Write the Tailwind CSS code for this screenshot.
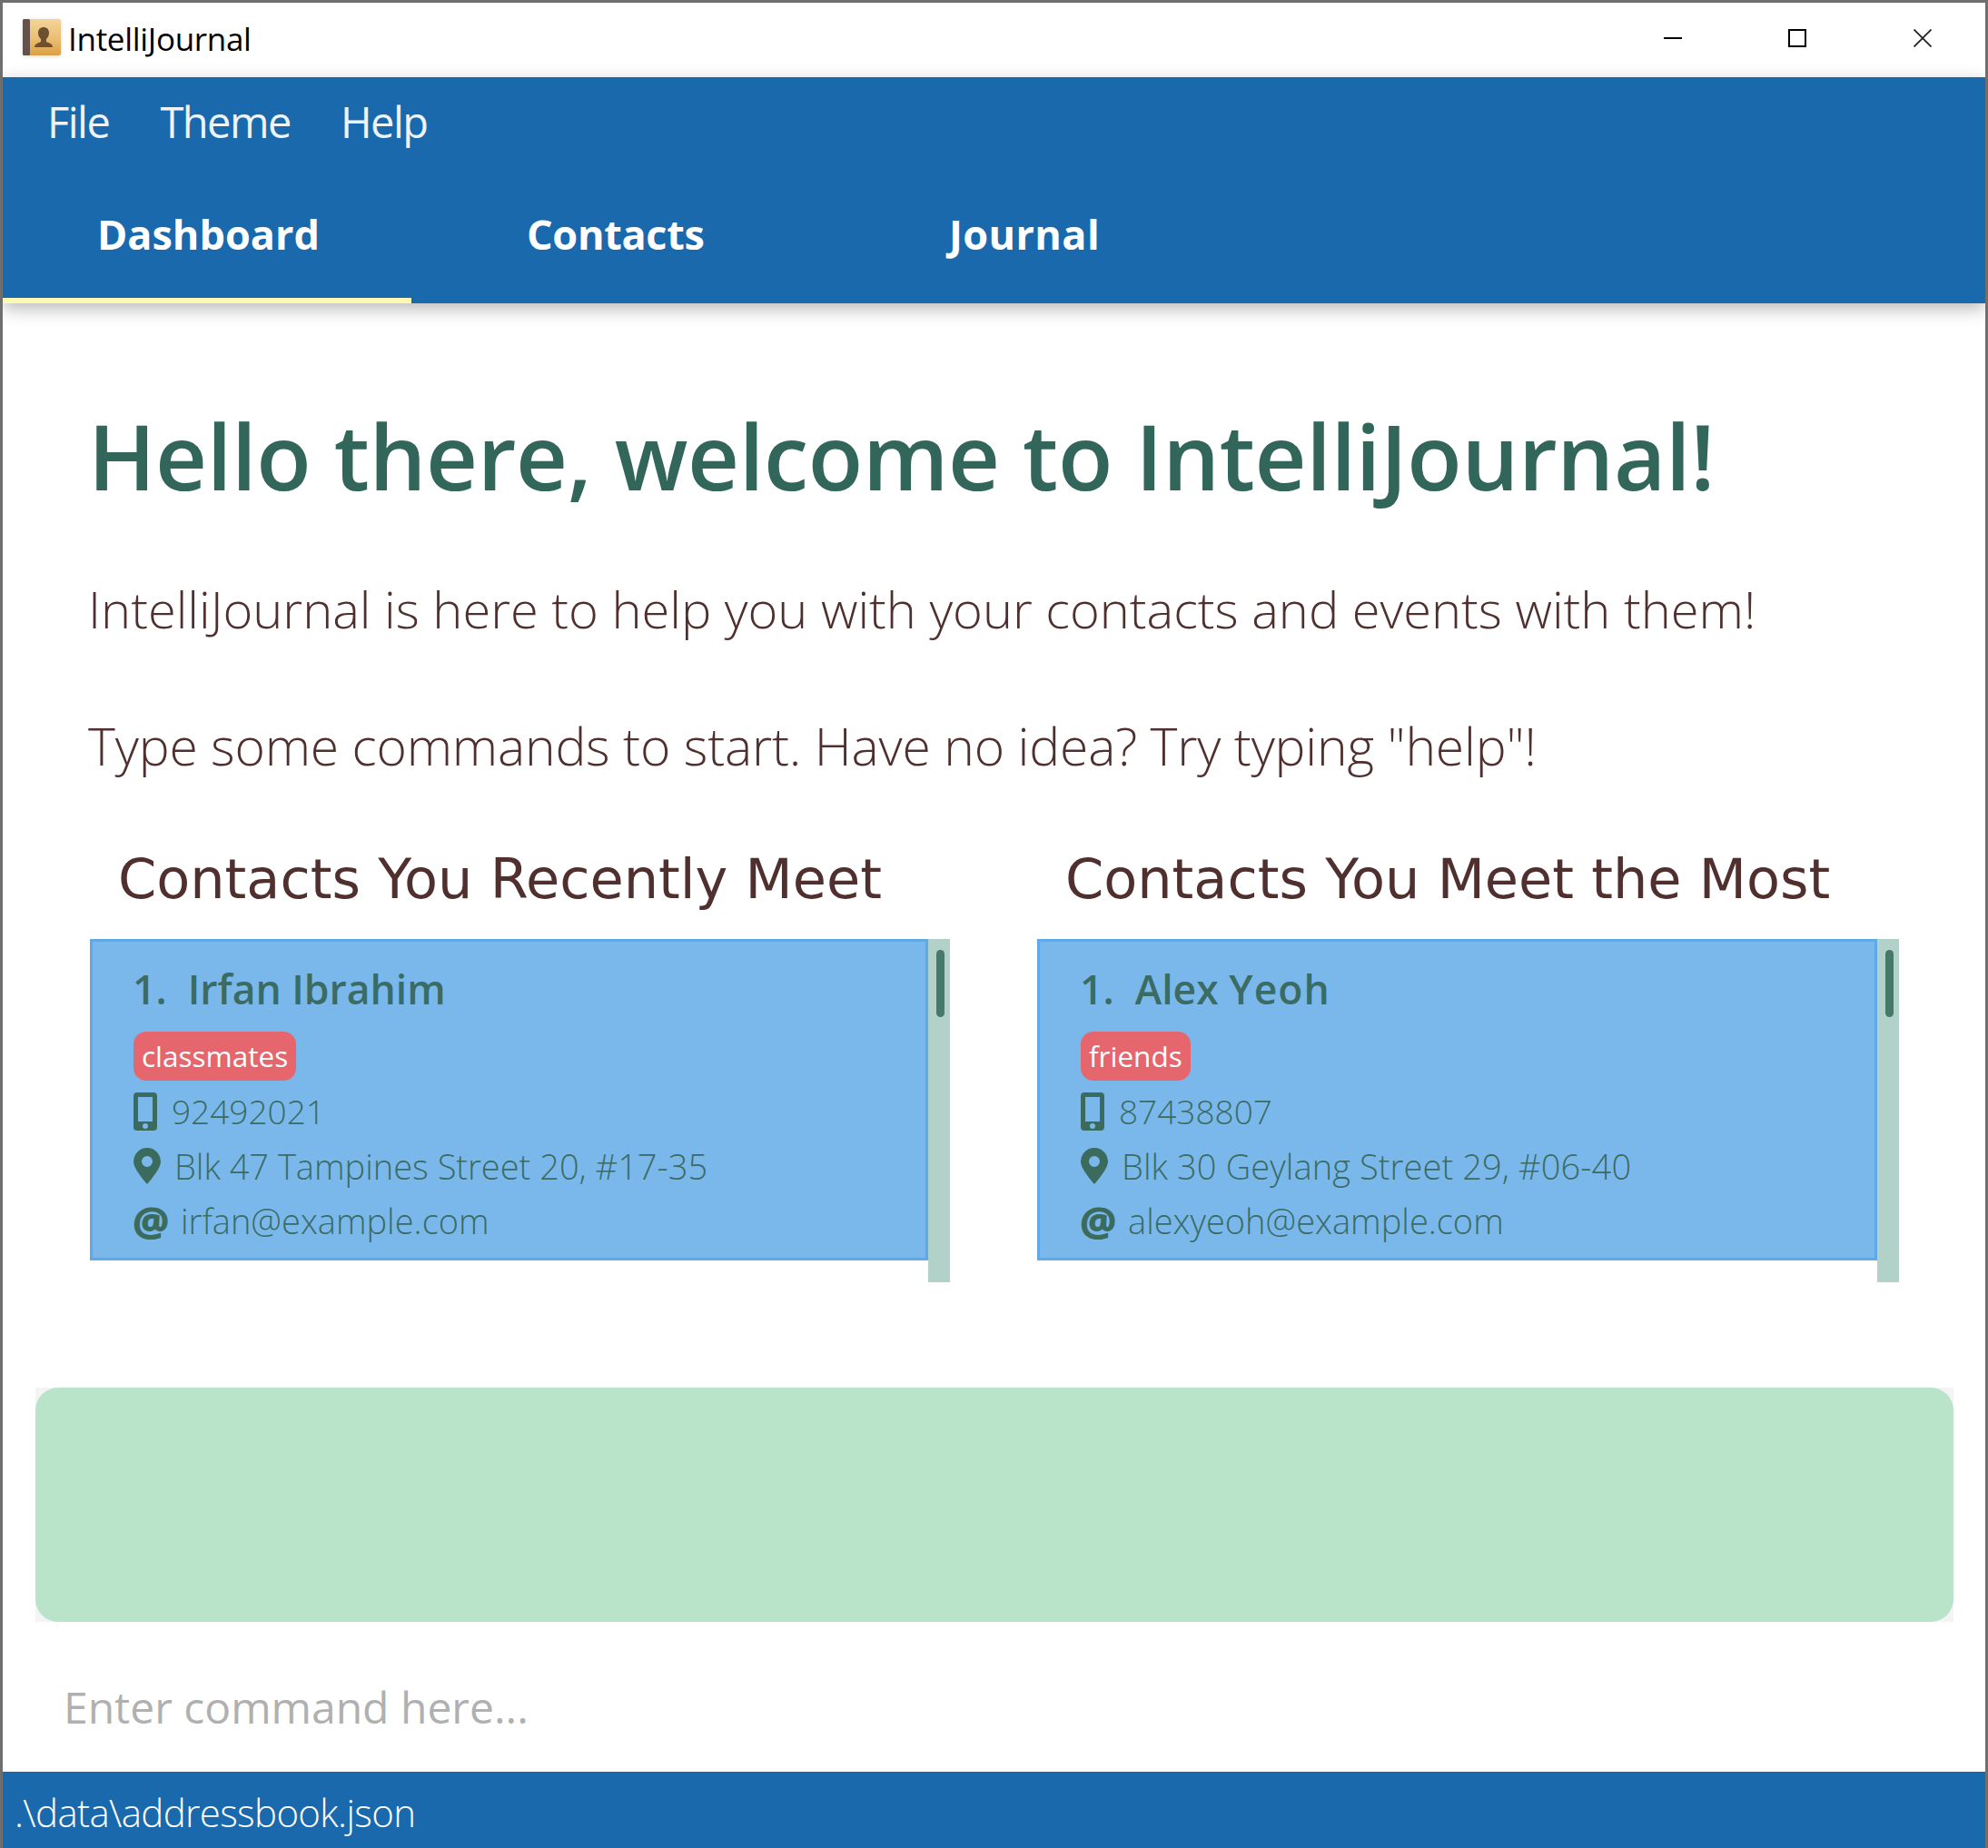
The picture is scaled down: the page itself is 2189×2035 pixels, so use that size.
<!DOCTYPE html>
<html lang="en">
<head>
  <meta charset="UTF-8" />
  <title>IntelliJournal</title>
  <script src="https://cdn.jsdelivr.net/npm/@tailwindcss/browser@4"></script>
</head>
<body class="bg-white font-['Open_Sans',sans-serif] overflow-hidden">
  <div class="relative w-[2189px] h-[2035px] flex flex-col border-x-[3px] border-t-[3px] border-[#6f6f6f] overflow-hidden">
    <!-- desktop showing through the window edge -->
    <div class="absolute left-[-3px] top-[142px] w-[3px] h-[190px] bg-[#2f3b6b]"></div>
    <div class="absolute right-[-3px] top-[142px] w-[3px] h-[190px] bg-[#2f3b6b]"></div>

    <!-- title bar -->
    <div class="h-[82px] shrink-0 flex items-center bg-white">
      <svg class="ml-[21px] mb-[4px] w-[44px] h-[42px] drop-shadow-sm" viewBox="0 0 44 42">
        <defs>
          <linearGradient id="book" x1="0" y1="0" x2="0" y2="1">
            <stop offset="0" stop-color="#f3d498" />
            <stop offset="0.5" stop-color="#ecc077" />
            <stop offset="1" stop-color="#dba044" />
          </linearGradient>
        </defs>
        <rect x="1" y="0" width="42" height="40" rx="2" fill="url(#book)" />
        <rect x="1" y="0" width="8" height="40" rx="1.5" fill="#64524a" />
        <path d="M14 31c0-4 5-5 7-6v-3c-2-2-3-4-3-7 0-4 3-6 6-6s6 2 6 6c0 3-1 5-3 7v3c2 1 7 2 7 6z" fill="#6d5030" />
      </svg>
      <span class="ml-[7px] mb-[1px] text-[35px] text-black tracking-[-0.3px]">IntelliJournal</span>
      <div class="ml-auto flex items-center mb-[4px]">
        <svg class="w-[20px] h-[20px]" viewBox="0 0 20 20"><path d="M0 10h20" stroke="#000" stroke-width="2" /></svg>
        <svg class="ml-[117px] w-[20px] h-[20px]" viewBox="0 0 20 20"><rect x="1" y="1" width="18" height="18" fill="none" stroke="#000" stroke-width="2" /></svg>
        <svg class="ml-[118px] mr-[59px] w-[20px] h-[20px]" viewBox="0 0 20 20"><path d="M0.5 0.5l19 19M19.5 0.5l-19 19" stroke="#222" stroke-width="1.8" /></svg>
      </div>
    </div>

    <!-- menu and tabs -->
    <div class="relative z-10 h-[249px] shrink-0 bg-[#1a69ad] shadow-[0_6px_18px_rgba(0,0,0,0.28)]">
      <div class="h-[98px] flex items-center text-[47px] text-[#eef3f8] tracking-[-1.5px]">
        <span class="ml-[49px]">File</span>
        <span class="ml-[56px]">Theme</span>
        <span class="ml-[55px]">Help</span>
      </div>
      <div class="flex h-[151px] text-[45px] font-bold text-white">
        <div class="w-[450px] h-full pt-[41px] pl-[104px] border-b-[6px] border-[#fdf9b4]">Dashboard</div>
        <div class="w-[463px] h-full pt-[41px] pl-[127px] tracking-[-0.3px]">Contacts</div>
        <div class="h-full pt-[41px] pl-[129px] tracking-[0.4px]">Journal</div>
      </div>
    </div>

    <!-- dashboard -->
    <div class="flex-1 flex flex-col">
      <div class="pl-[94px] pt-[103px] pb-[3px] text-[#33665a] text-[99px] font-semibold leading-[130px] tracking-[-0.35px] whitespace-nowrap">Hello there, welcome to IntelliJournal!</div>
      <div class="pl-[94px] mt-[50px] text-[#50302f] text-[56px] font-light leading-[100px] whitespace-nowrap">IntelliJournal is here to help you with your contacts and events with them!</div>
      <div class="pl-[94px] mt-[51px] text-[#50302f] text-[57px] font-light leading-[100px] tracking-[-0.2px] whitespace-nowrap">Type some commands to start. Have no idea? Try typing "help"!</div>

      <div class="grid grid-cols-[947px_949px] gap-[96px] pl-[96px] mt-[47px]">
        <div>
          <div class="pl-[31px] h-[100px] leading-[100px] text-[60.5px] text-[#50302f] font-['DejaVu_Sans',sans-serif] whitespace-nowrap">Contacts You Recently Meet</div>
          <div class="flex h-[378px] mt-[16px]">
            <div class="flex-1 h-[354px] border-[3px] border-[#5eaae8] bg-[#7ab8ec] pl-[44px] pr-[45px] pt-[22px] text-[#3a6c63]">
              <div class="h-[60px] leading-[60px] text-[44.5px] font-semibold whitespace-nowrap">1.&nbsp;&nbsp;Irfan Ibrahim</div>
              <div class="mt-[17px] ml-[1px] w-fit h-[54px] leading-[54px] px-[9px] rounded-[14px] bg-[#e5666d] text-white text-[31.5px]">classmates</div>
              <div class="mt-[4px] ml-[1px] h-[60px] flex items-center text-[37px] font-light">
                <svg class="w-[26px] h-[42px] shrink-0" viewBox="0 0 26 42"><path fill-rule="evenodd" d="M4 0h18a4 4 0 0 1 4 4v34a4 4 0 0 1-4 4H4a4 4 0 0 1-4-4V4a4 4 0 0 1 4-4zm1 5v27h16V5zm8 29a3 3 0 1 0 0 6 3 3 0 0 0 0-6z" fill="#3a6b5c" /></svg>
                <span class="ml-[16px]">92492021</span>
              </div>
              <div class="ml-[1px] h-[60px] flex items-center text-[38px] font-light whitespace-nowrap">
                <svg class="w-[30px] h-[40px] shrink-0" viewBox="0 0 30 40"><path fill-rule="evenodd" d="M15 0a15 15 0 0 1 15 15c0 7-9 18-15 25C9 33 0 22 0 15A15 15 0 0 1 15 0zm0 9a6 6 0 1 0 0 12 6 6 0 0 0 0-12z" fill="#3a6b5c" /></svg>
                <span class="ml-[15px]">Blk 47 Tampines Street 20, #17-35</span>
              </div>
              <div class="h-[60px] flex items-center text-[38px] font-light whitespace-nowrap">
                <span class="w-[37px] shrink-0 text-[45px] font-extrabold text-[#3a6b5c] leading-none">@</span>
                <span class="ml-[16px]">irfan@example.com</span>
              </div>
            </div>
            <div class="w-[24px] h-full bg-[#b1d1c9] pt-[12px] pl-[9px]"><div class="w-[9px] h-[74px] rounded-full bg-[#47796a]"></div></div>
          </div>
        </div>
        <div>
          <div class="pl-[31px] h-[100px] leading-[100px] text-[60.5px] text-[#50302f] font-['DejaVu_Sans',sans-serif] whitespace-nowrap">Contacts You Meet the Most</div>
          <div class="flex h-[378px] mt-[16px]">
            <div class="flex-1 h-[354px] border-[3px] border-[#5eaae8] bg-[#7ab8ec] pl-[44px] pr-[45px] pt-[22px] text-[#3a6c63]">
              <div class="h-[60px] leading-[60px] text-[44.5px] font-semibold whitespace-nowrap">1.&nbsp;&nbsp;Alex <span class="tracking-[1px]">Yeoh</span></div>
              <div class="mt-[17px] ml-[1px] w-fit h-[54px] leading-[54px] px-[9px] rounded-[14px] bg-[#e5666d] text-white text-[31.5px]">friends</div>
              <div class="mt-[4px] ml-[1px] h-[60px] flex items-center text-[37px] font-light">
                <svg class="w-[26px] h-[42px] shrink-0" viewBox="0 0 26 42"><path fill-rule="evenodd" d="M4 0h18a4 4 0 0 1 4 4v34a4 4 0 0 1-4 4H4a4 4 0 0 1-4-4V4a4 4 0 0 1 4-4zm1 5v27h16V5zm8 29a3 3 0 1 0 0 6 3 3 0 0 0 0-6z" fill="#3a6b5c" /></svg>
                <span class="ml-[16px]">87438807</span>
              </div>
              <div class="ml-[1px] h-[60px] flex items-center text-[38px] font-light whitespace-nowrap">
                <svg class="w-[30px] h-[40px] shrink-0" viewBox="0 0 30 40"><path fill-rule="evenodd" d="M15 0a15 15 0 0 1 15 15c0 7-9 18-15 25C9 33 0 22 0 15A15 15 0 0 1 15 0zm0 9a6 6 0 1 0 0 12 6 6 0 0 0 0-12z" fill="#3a6b5c" /></svg>
                <span class="ml-[15px] tracking-[0.1px]">Blk 30 Geylang Street 29, #06-40</span>
              </div>
              <div class="h-[60px] flex items-center text-[38px] font-light whitespace-nowrap">
                <span class="w-[37px] shrink-0 text-[45px] font-extrabold text-[#3a6b5c] leading-none">@</span>
                <span class="ml-[16px]">alexyeoh@example.com</span>
              </div>
            </div>
            <div class="w-[24px] h-full bg-[#b1d1c9] pt-[12px] pl-[9px]"><div class="w-[9px] h-[74px] rounded-full bg-[#47796a]"></div></div>
          </div>
        </div>
      </div>

      <!-- result box -->
      <div class="mx-[36px] mt-[116px] h-[258px] w-[2112px] bg-[#f4f4f4]">
        <div class="h-full rounded-[25px] bg-[#b9e4c9]"></div>
      </div>

      <!-- command box -->
      <div class="h-[165px] flex items-center pl-[67px] pt-[22px] text-[48px] text-[#b0b0b0]">Enter command here...</div>

      <!-- status bar -->
      <div class="h-[84px] flex items-center pl-[13px] pt-[5px] bg-[#1a69ad] text-[42px] font-light tracking-[-0.64px] text-white">.\data\addressbook.json</div>
    </div>
  </div>
</body>
</html>
